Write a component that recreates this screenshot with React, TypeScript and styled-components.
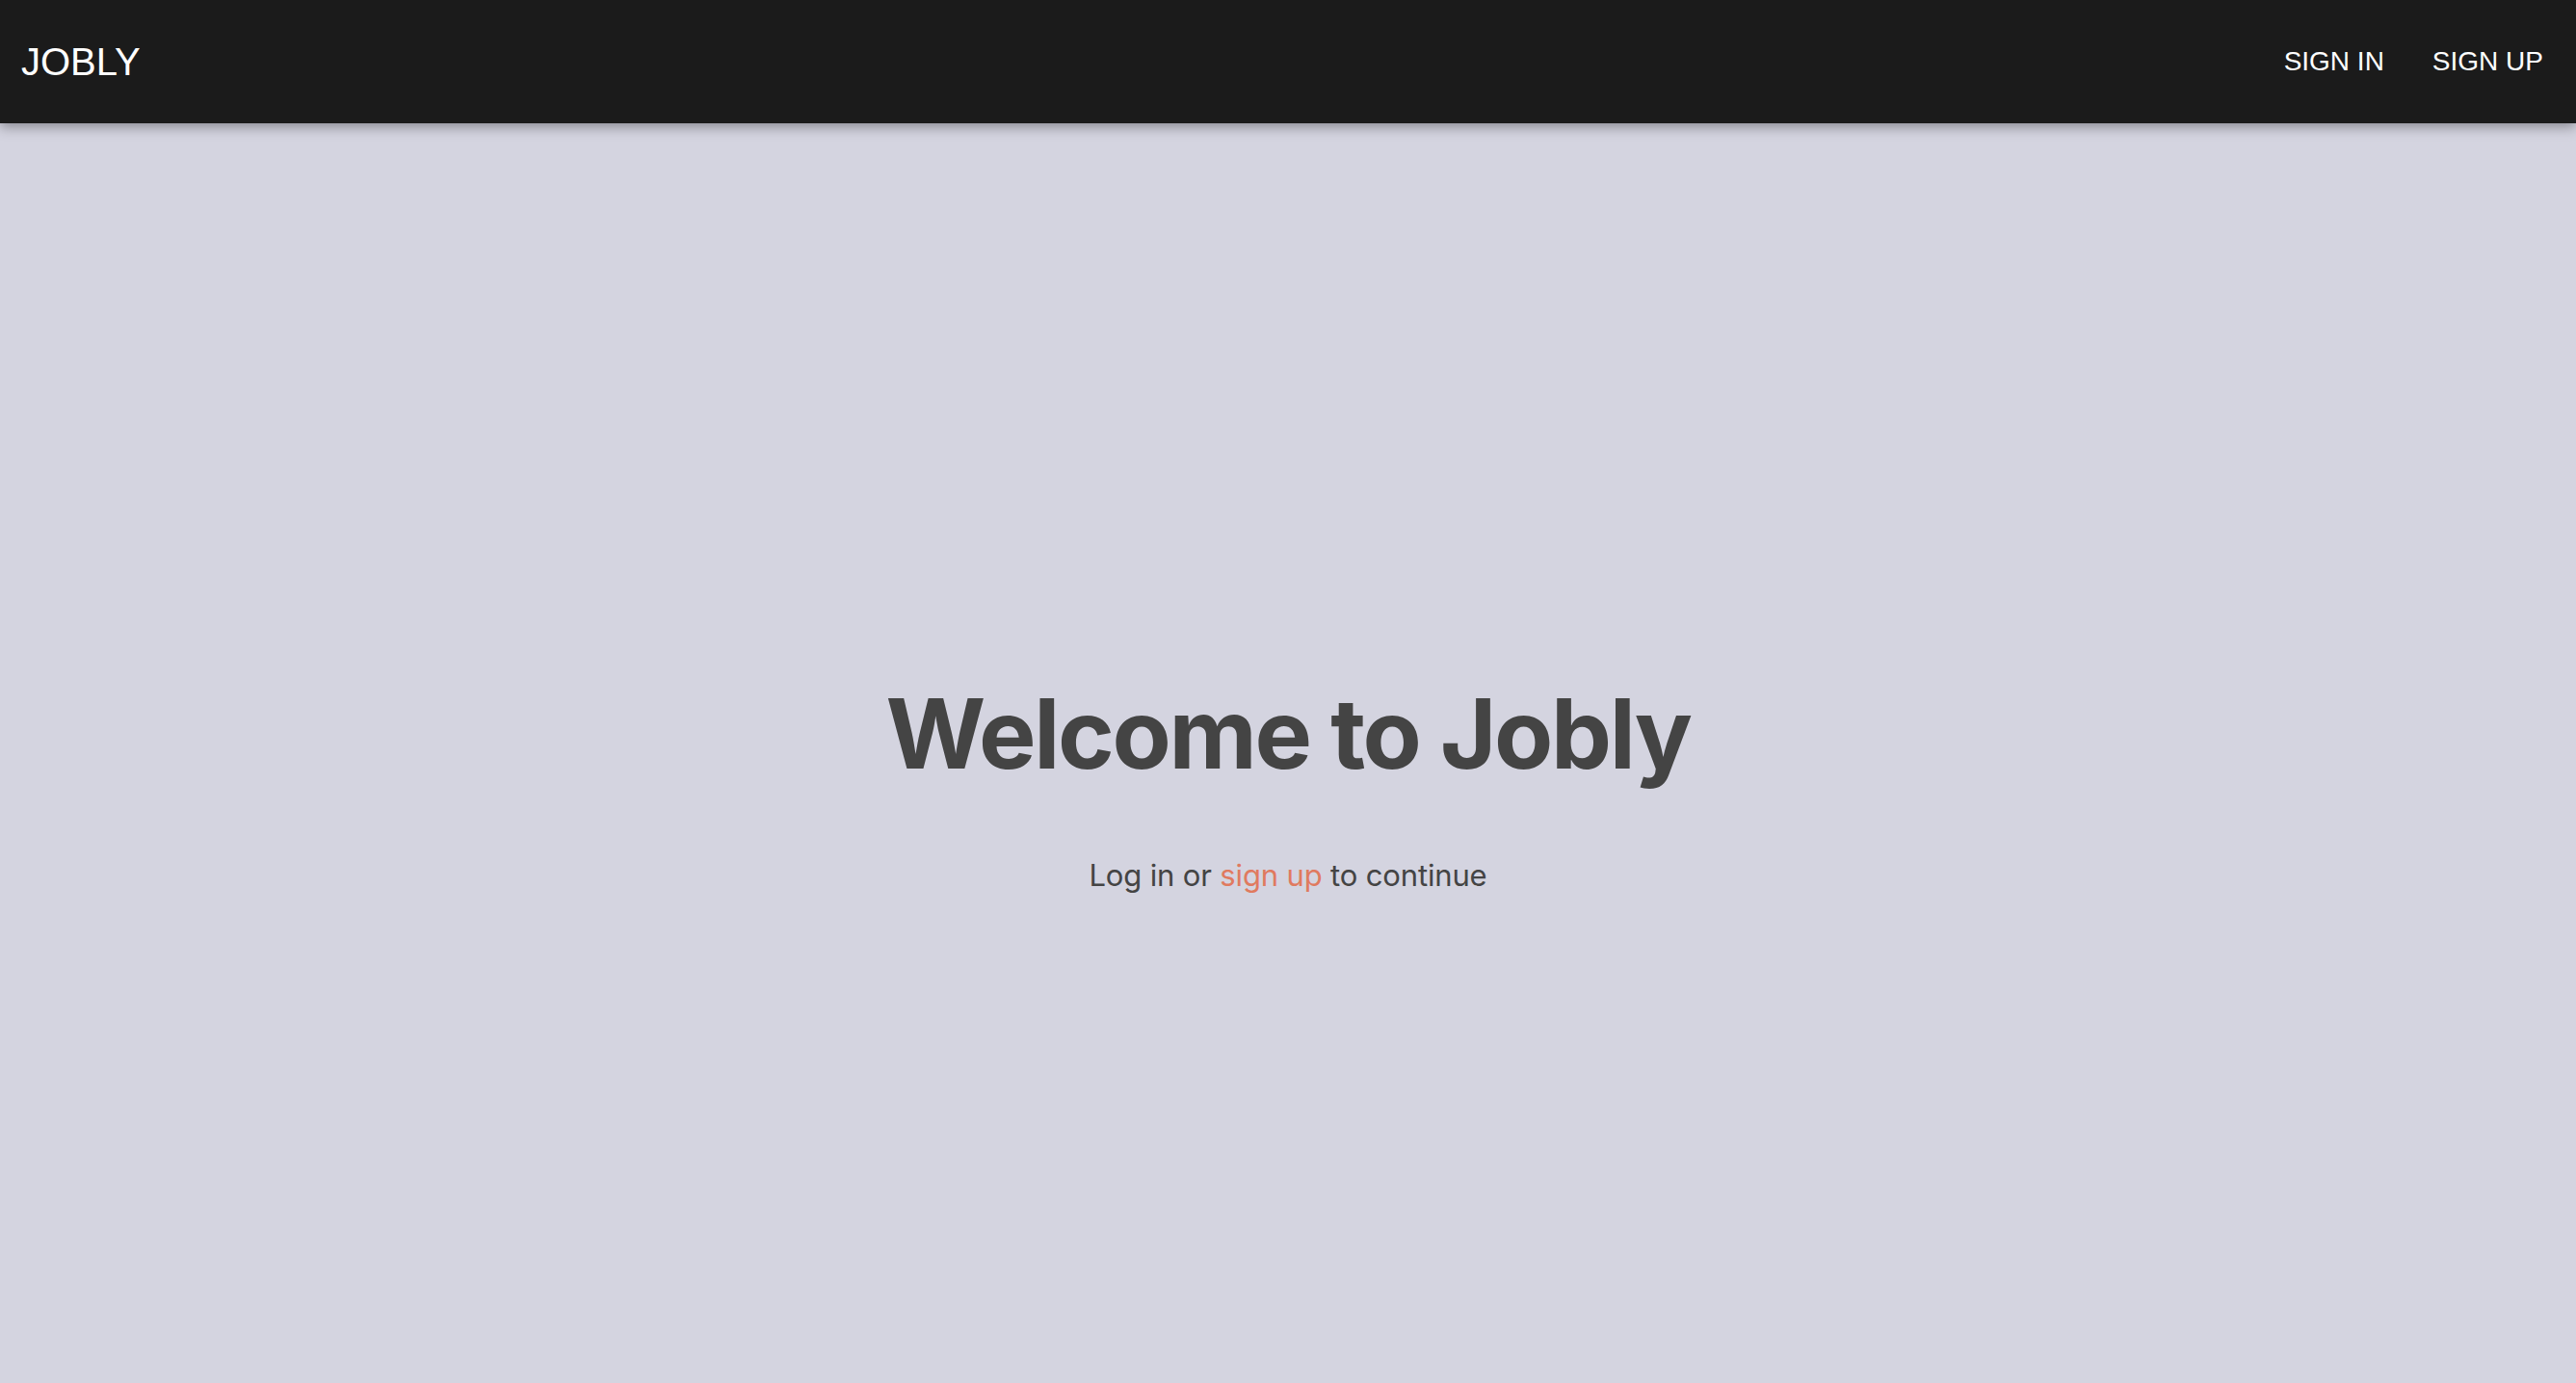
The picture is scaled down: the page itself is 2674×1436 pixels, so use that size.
import React from "react";
import styled, { createGlobalStyle } from "styled-components";

const GlobalStyle = createGlobalStyle`
  html, body {
    margin: 0;
    padding: 0;
    background: #d4d4e0;
  }
  * { box-sizing: border-box; }
`;

const Page = styled.div`
  min-height: 100vh;
  display: flex;
  flex-direction: column;
  background: #d4d4e0;
`;

const NavBar = styled.header`
  height: 128px;
  background: #1b1b1b;
  display: flex;
  align-items: center;
  justify-content: space-between;
  padding: 0 34px 0 22px;
  box-shadow: 0 4px 12px rgba(0, 0, 0, 0.35);
  position: relative;
  z-index: 1;
`;

const Brand = styled.a`
  font-family: "Liberation Sans", Arial, sans-serif;
  font-size: 40px;
  color: #ffffff;
  text-decoration: none;
`;

const NavLinks = styled.nav`
  display: flex;
  align-items: center;
  gap: 50px;
`;

const NavLink = styled.a`
  font-family: "Liberation Sans", Arial, sans-serif;
  font-size: 28px;
  color: #ffffff;
  text-decoration: none;
`;

const Main = styled.main`
  flex: 1;
  display: flex;
  flex-direction: column;
  align-items: center;
  padding-top: 584px;
`;

const Title = styled.h1`
  margin: 0;
  font-family: Inter, "Noto Sans", sans-serif;
  font-weight: 700;
  font-size: 100px;
  line-height: 1;
  letter-spacing: -2.3px;
  color: #444444;
`;

const Subtitle = styled.p`
  margin: 78px 0 0;
  font-family: Inter, "Noto Sans", sans-serif;
  font-size: 31px;
  line-height: 1.2;
  letter-spacing: -0.15px;
  color: #444444;
`;

const InlineLink = styled.a`
  color: #e07a5f;
  text-decoration: none;
`;

export default function App() {
  return (
    <>
      <GlobalStyle />
      <Page>
        <NavBar>
          <Brand href="#">JOBLY</Brand>
          <NavLinks>
            <NavLink href="#">SIGN IN</NavLink>
            <NavLink href="#">SIGN UP</NavLink>
          </NavLinks>
        </NavBar>
        <Main>
          <Title>Welcome to Jobly</Title>
          <Subtitle>
            Log in or <InlineLink href="#">sign up</InlineLink> to continue
          </Subtitle>
        </Main>
      </Page>
    </>
  );
}
